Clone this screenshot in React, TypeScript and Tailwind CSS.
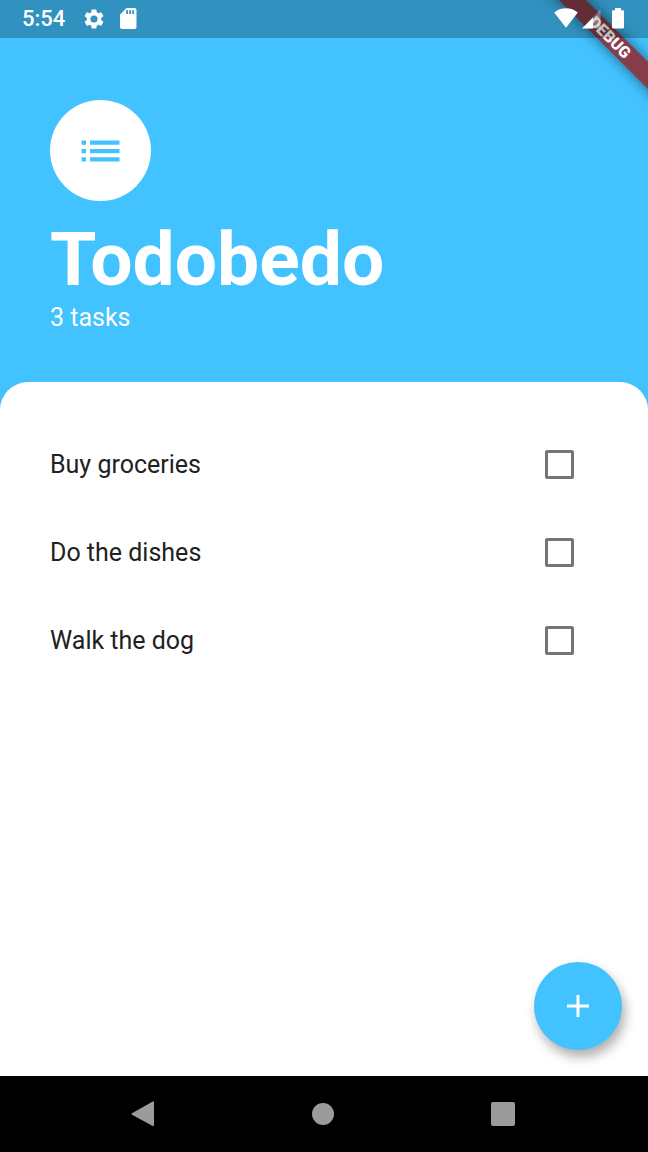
import { useState } from "react";

type Task = { id: string; label: string };

const tasks: Task[] = [
  { id: "groceries", label: "Buy groceries" },
  { id: "dishes", label: "Do the dishes" },
  { id: "dog", label: "Walk the dog" },
];

function StatusBar() {
  return (
    <div className="relative z-20 flex h-[38px] items-center justify-between bg-black/25 px-[22px] text-white">
      <div className="flex items-center">
        <span className="w-[60px] text-[22px] leading-[38px] font-medium">5:54</span>
        <svg className="h-6 w-6" viewBox="0 0 24 24" fill="currentColor" aria-hidden="true">
          <path d="M19.14 12.94c.04-.3.06-.61.06-.94 0-.32-.02-.64-.07-.94l2.03-1.58a.49.49 0 0 0 .12-.61l-1.92-3.32a.488.488 0 0 0-.59-.22l-2.39.96c-.5-.38-1.03-.7-1.62-.94l-.36-2.54a.484.484 0 0 0-.48-.41h-3.84c-.24 0-.43.17-.47.41l-.36 2.54c-.59.24-1.13.57-1.62.94l-2.39-.96c-.22-.08-.47 0-.59.22L2.74 8.87c-.12.21-.08.47.12.61l2.03 1.58c-.05.3-.09.63-.09.94s.02.64.07.94l-2.03 1.58a.49.49 0 0 0-.12.61l1.92 3.32c.12.22.37.29.59.22l2.39-.96c.5.38 1.03.7 1.62.94l.36 2.54c.05.24.24.41.48.41h3.84c.24 0 .44-.17.47-.41l.36-2.54c.59-.24 1.13-.56 1.62-.94l2.39.96c.22.08.47 0 .59-.22l1.92-3.32c.12-.22.07-.47-.12-.61l-2.01-1.58zM12 15.6A3.6 3.6 0 1 1 12 8.4a3.6 3.6 0 0 1 0 7.2z" />
        </svg>
        <svg className="ml-[10px] h-6 w-6" viewBox="0 0 24 24" fill="currentColor" aria-hidden="true">
          <path
            fillRule="evenodd"
            d="M18.5 1H10.500L4 7.500v12.500c0 1.100.9 2 2 2h12.500c1.100 0 2-.9 2-2V3c0-1.100-.9-2-2-2zM12 7h-1.800V3.300H12V7zm3 0h-1.800V3.300H15V7zm3 0h-1.800V3.300H18V7z"
          />
        </svg>
      </div>
      <div className="flex items-center">
        <svg className="h-6 w-6" viewBox="0 0 24 24" fill="currentColor" aria-hidden="true">
          <path d="M12 20.800.2 5.400C3.400 2.700 7.500 1.200 12 1.200s8.600 1.500 11.800 4.200z" />
        </svg>
        <svg className="ml-[3px] h-6 w-6" viewBox="0 0 24 24" fill="currentColor" aria-hidden="true">
          <path d="M19.500 2.500V21.500H1z" fillOpacity="0.3" />
          <path d="M12 10.400V21.500H1z" />
        </svg>
        <svg className="ml-[5px] h-6 w-4" viewBox="0 0 16 24" fill="currentColor" aria-hidden="true">
          <path d="M12.800 3.300H11V1H5v2.300H3.200C2.500 3.300 2 3.800 2 4.500v15.800c0 .7.5 1.200 1.200 1.200h9.600c.7 0 1.200-.5 1.200-1.200V4.500c0-.7-.5-1.200-1.200-1.200z" />
        </svg>
      </div>
    </div>
  );
}

function DebugBanner() {
  return (
    <div className="pointer-events-none absolute top-0 right-0 z-10 h-[120px] w-[120px] overflow-hidden">
      <div className="absolute top-[28px] -right-[42px] h-[19px] w-[160px] rotate-45 bg-[#853c4b] text-center text-[16px] leading-[19px] font-black text-white shadow-[0_0_14px_rgba(0,0,0,0.5)]">
        DEBUG
      </div>
    </div>
  );
}

function TaskRow({ task }: { task: Task }) {
  const [done, setDone] = useState(false);
  return (
    <li className="flex h-[88px] items-center justify-between pr-[74px] pl-[50px]">
      <label htmlFor={task.id} className="text-[25px] leading-[31px] text-[#212121]">
        {task.label}
      </label>
      <input
        id={task.id}
        type="checkbox"
        checked={done}
        onChange={(e) => setDone(e.target.checked)}
        className="h-[29px] w-[29px] appearance-none rounded-[2px] border-3 border-[#757575] checked:border-[#42c2ff] checked:bg-[#42c2ff]"
      />
    </li>
  );
}

function NavBar() {
  return (
    <nav className="flex h-[76px] bg-black pr-[55px] pl-[53px] text-[#9b9b9b]">
      <button type="button" aria-label="Back" className="flex flex-1 items-center justify-center">
        <svg className="h-7 w-7" viewBox="0 0 28 28" fill="currentColor">
          <path d="M23.700 1.600c.8-.4 1.300 0 1.300.8v22.700c0 .8-.5 1.200-1.300.8L3 14.700c-.7-.4-.7-1 0-1.400z" />
        </svg>
      </button>
      <button type="button" aria-label="Home" className="flex flex-1 items-center justify-center">
        <span className="h-[22px] w-[22px] rounded-full bg-[#9b9b9b]" />
      </button>
      <button type="button" aria-label="Overview" className="flex flex-1 items-center justify-center">
        <span className="h-6 w-6 rounded-[2px] bg-[#9b9b9b]" />
      </button>
    </nav>
  );
}

export default function App() {
  return (
    <div className="relative flex min-h-screen flex-col overflow-hidden bg-[#42c2ff] font-['Roboto',sans-serif]">
      <DebugBanner />
      <StatusBar />
      <header className="px-[50px] pt-[62px] pb-[49px] text-white">
        <div className="flex h-[101px] w-[101px] items-center justify-center rounded-full bg-white text-[#42c2ff]">
          <svg className="h-12 w-12" viewBox="0 0 48 48" fill="currentColor" aria-hidden="true">
            <path d="M4.500 13.500H9v4.300H4.500zM13 13.500h29.500v4.300H13zM4.500 22H9v4.300H4.500zM13 22h29.500v4.300H13zM4.500 30.200H9v4.300H4.500zM13 30.200h29.500v4.300H13z" />
          </svg>
        </div>
        <h1 className="mt-[14px] text-[75px] leading-[88px] font-bold">Todobedo</h1>
        <p className="text-[25px] leading-[30px]">3 tasks</p>
      </header>
      <main className="relative flex flex-1 flex-col rounded-t-[28px] bg-white pt-[38px]">
        <ul>
          {tasks.map((task) => (
            <TaskRow key={task.id} task={task} />
          ))}
        </ul>
        <button
          type="button"
          aria-label="Add task"
          className="absolute right-[26px] bottom-[26px] flex h-[88px] w-[88px] items-center justify-center rounded-full bg-[#42c2ff] text-white shadow-[3px_7px_12px_rgba(0,0,0,0.32)]"
        >
          <svg className="h-6 w-6" viewBox="0 0 24 24" fill="currentColor">
            <path d="M10.500 1h3v9.500H23v3h-9.500V23h-3v-9.500H1v-3h9.500z" />
          </svg>
        </button>
      </main>
      <NavBar />
    </div>
  );
}
